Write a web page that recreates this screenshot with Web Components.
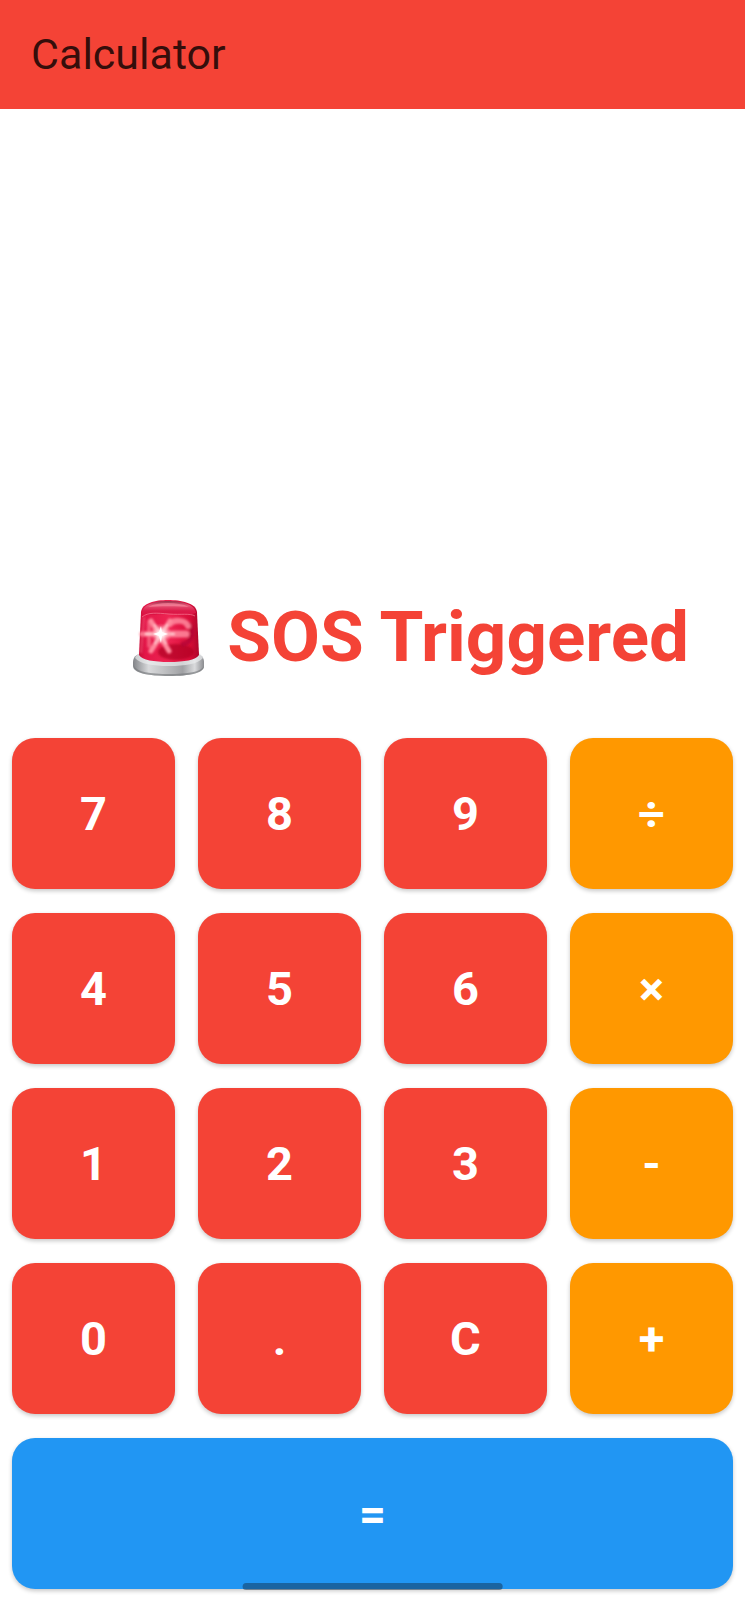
<!DOCTYPE html>
<html lang="en">
<head>
<meta charset="utf-8">
<meta name="viewport" content="width=device-width, initial-scale=1">
<title>Calculator</title>
<style>
  body { margin: 0; background: #fff; font-family: Roboto, "Liberation Sans", sans-serif; }
</style>
</head>
<body>
<calc-app>
  <app-header slot="header">Calculator</app-header>
  <calc-display slot="display"><siren-icon></siren-icon> SOS Triggered</calc-display>
  <calc-keypad slot="keypad">
    <calc-key>7</calc-key><calc-key>8</calc-key><calc-key>9</calc-key><calc-key kind="operator">÷</calc-key>
    <calc-key>4</calc-key><calc-key>5</calc-key><calc-key>6</calc-key><calc-key kind="operator">×</calc-key>
    <calc-key>1</calc-key><calc-key>2</calc-key><calc-key>3</calc-key><calc-key kind="operator">-</calc-key>
    <calc-key>0</calc-key><calc-key>.</calc-key><calc-key>C</calc-key><calc-key kind="operator">+</calc-key>
    <calc-key kind="equals">=</calc-key>
  </calc-keypad>
</calc-app>
<script>
  function define(name, markup) {
    const template = document.createElement('template');
    template.innerHTML = markup;
    customElements.define(name, class extends HTMLElement {
      constructor() {
        super();
        this.attachShadow({ mode: 'open' }).append(template.content.cloneNode(true));
      }
    });
  }

  define('calc-app', `
    <style>
      :host { display: flex; flex-direction: column; min-height: 100vh; position: relative; }
      main { flex: 1; display: flex; flex-direction: column; }
      /* gesture handle floating over the last row */
      .handle { position: absolute; bottom: 10px; left: 50%; width: 35%; height: 7px;
        transform: translateX(-50%); border-radius: 4px; background: rgba(20, 50, 80, .5); }
    </style>
    <slot name="header"></slot>
    <main><slot name="display"></slot><slot name="keypad"></slot></main>
    <div class="handle"></div>`);

  define('app-header', `
    <style>
      :host { display: block; }
      header { display: flex; align-items: center; height: 109px; padding: 0 31px; background: #f44336; }
      h1 { margin: 0; font-size: 43px; line-height: 49px; font-weight: 400; color: rgba(0, 0, 0, .8); }
    </style>
    <header><h1><slot></slot></h1></header>`);

  define('calc-display', `
    <style>
      :host { flex: 1; display: flex; align-items: flex-end; justify-content: flex-end; padding: 0 56px 48px; }
      output { font-size: 71px; line-height: 82px; font-weight: 700; color: #f44336; text-align: right; }
    </style>
    <output><slot></slot></output>`);

  define('siren-icon', `
    <style>
      :host { display: inline-block; width: 72px; height: 78px; margin-right: 5px; vertical-align: -16px; }
      svg { display: block; width: 100%; height: 100%; }
    </style>
    <svg viewBox="13 9 72 78" role="img" aria-label="Siren">
      <defs>
        <linearGradient id="glass" x1="0" x2="1">
          <stop offset="0" stop-color="#c80c38"/><stop offset=".1" stop-color="#e31648"/>
          <stop offset=".5" stop-color="#ee2452"/><stop offset=".85" stop-color="#d90d3a"/>
          <stop offset="1" stop-color="#ad062b"/>
        </linearGradient>
        <linearGradient id="top" x1="0" x2="0" y1="0" y2="1">
          <stop offset="0" stop-color="#99304b"/><stop offset=".3" stop-color="#e45576"/>
          <stop offset=".7" stop-color="#dc1c4a"/><stop offset="1" stop-color="#dc1243"/>
        </linearGradient>
        <linearGradient id="metal" x1="0" x2="1">
          <stop offset="0" stop-color="#828488"/><stop offset=".22" stop-color="#d9dadc"/>
          <stop offset=".42" stop-color="#c2c3c5"/><stop offset=".7" stop-color="#a0a1a4"/>
          <stop offset=".87" stop-color="#dadbdd"/><stop offset="1" stop-color="#8b8c90"/>
        </linearGradient>
        <radialGradient id="glow"><stop offset="0" stop-color="#fff"/>
          <stop offset=".3" stop-color="#ffe1e4"/><stop offset="1" stop-color="#ff8296" stop-opacity="0"/></radialGradient>
        <filter id="soft" filterUnits="userSpaceOnUse" x="13" y="9" width="72" height="78"><feGaussianBlur stdDeviation="1.1"/></filter>
      </defs>
      <path d="M13 72C13 63 25 60 49 60s35 3 35 12v4c0 7-14 10-35 10S13 83 13 76z" fill="url(#metal)"/>
      <path d="M14 76c3 6 16 8 35 8s32-2 35-8c0 7-14 10-35 10S14 83 14 76z" fill="#77797d" opacity=".65"/>
      <path d="M15 68c2-5 8-7 15-8h40c8 1 11 3 13 8-5 6-18 8-34 8s-29-2-34-8z" fill="#edeeef" opacity=".65"/>
      <path d="M19 65l2-43C22 13 35 10 48 10s28 3 29 12l2 43c-3 5-15 7-30 7s-27-2-30-7z" fill="url(#glass)"/>
      <ellipse cx="56" cy="62" rx="18" ry="8" fill="#b00022" opacity=".7" filter="url(#soft)"/>
      <g fill="none" stroke="#ff8a9d" stroke-linecap="round" filter="url(#soft)">
        <path d="M70 35c4 8 1 18-7 19" stroke="#a90730" stroke-width="5" opacity=".6"/>
        <path d="M68 36c-2-6-14-7-18-2" stroke-width="6" opacity=".85"/>
        <path d="M41 44h25" stroke-width="7" opacity=".85"/>
        <path d="M22 44h20M31 31l18 30M50 31L31 61" stroke-width="5"/>
        <path d="M29 32v24" stroke-width="4" opacity=".55"/>
        <path d="M26 44h28M35 35l11 18M47 35L35 53" stroke="#ffd0d5" stroke-width="2"/>
      </g>
      <circle cx="41" cy="44" r="11" fill="url(#glow)"/>
      <path d="M41 36l1 6 6 2-6 2-1 7-2-7-6-2 6-2z" fill="#fff"/>
      <path d="M22 23C23 14 35 11 48 11s27 3 28 12c-5 2-14 1-27 1s-22 3-27-1z" fill="url(#top)"/>
      <path d="M28 17c6-3 12-4 20-4s15 1 21 4c-10-1-31-1-41 0z" fill="#ff9bae" opacity=".5"/>
      <path d="M22 27c6-5 15-4 27-3s21-1 26 2" fill="none" stroke="#f77b94" stroke-width="1" opacity=".7"/>
      <path d="M24 27l-3 36" stroke="#f55779" stroke-width="2" opacity=".65" filter="url(#soft)"/>
    </svg>`);

  define('calc-keypad', `
    <style>
      :host { display: grid; grid-template-columns: repeat(4, 1fr); grid-auto-rows: 151px;
        gap: 24px 23px; padding: 12px 12px 11px; }
    </style>
    <slot></slot>`);

  define('calc-key', `
    <style>
      :host { display: block; --key: #f44336; }
      :host([kind="operator"]) { --key: #ff9800; }
      :host([kind="equals"]) { --key: #2196f3; grid-column: 1 / -1; }
      button { display: block; width: 100%; height: 100%; margin: 0; padding: 0; border: 0;
        border-radius: 23px; background: var(--key); color: #fff; font-family: inherit;
        font-size: 47px; font-weight: 700; line-height: 55px; cursor: pointer;
        box-shadow: 0 2px 4px rgba(0, 0, 0, .22); }
    </style>
    <button type="button"><slot></slot></button>`);
</script>
</body>
</html>
